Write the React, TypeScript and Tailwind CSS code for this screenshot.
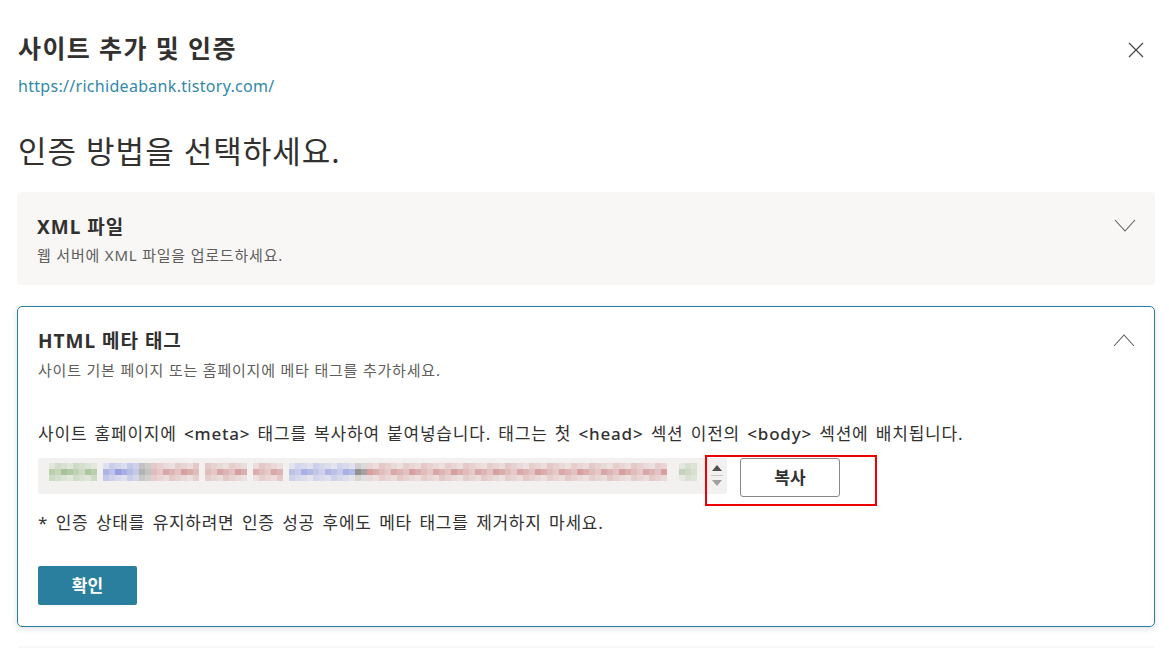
import React from "react";

const font = { fontFamily: '"Noto Sans", "Noto Sans CJK KR", sans-serif' };

const segs = [
  { x0: 49, x1: 97, c: "#9fbf8f" },
  { x0: 103, x1: 139, c: "#8f99e0" },
  { x0: 139, x1: 151, c: "#8a8a8a" },
  { x0: 151, x1: 199, c: "#d49a9a" },
  { x0: 205, x1: 247, c: "#d49a9a" },
  { x0: 253, x1: 283, c: "#d49a9a" },
  { x0: 289, x1: 355, c: "#a3abe4" },
  { x0: 355, x1: 367, c: "#8a8a8a" },
  { x0: 367, x1: 667, c: "#d49a9a" },
  { x0: 679, x1: 697, c: "#b7c9a8" },
];

const BlurredTag = () => {
  const rects: React.ReactElement[] = [];
  segs.forEach((s, si) => {
    for (let x = s.x0; x < s.x1; x += 6) {
      for (let r = 0; r < 3; r++) {
        const h = ((x * 37 + r * 17 + si * 11) % 7) / 10;
        const op = r === 1 ? 0.45 + h * 0.8 : 0.18 + h * 0.45;
        rects.push(
          <rect key={`${si}-${x}-${r}`} x={x - 38} y={5 + r * 6} width={6} height={6} fill={s.c} opacity={op} />
        );
      }
    }
  });
  return (
    <svg width="666" height="36" className="absolute left-0 top-0">
      {rects}
    </svg>
  );
};

const Chevron = ({ up }: { up?: boolean }) => (
  <svg width="22" height="14" viewBox="0 0 22 14" className="mt-1">
    <path d={up ? "M1 13 L11 2 L21 13" : "M1 1 L11 12 L21 1"} fill="none" stroke="#605e5c" strokeWidth="1.1" />
  </svg>
);

export default function App() {
  return (
    <div className="w-[1169px] h-[648px] overflow-hidden bg-white text-[#323130]" style={font}>
      <div className="flex justify-between pl-[18px] pr-[25px] pt-[33px]">
        <div>
          <h1 className="text-[25px] font-bold leading-[30px] tracking-[1.4px]">사이트 추가 및 인증</h1>
          <a className="block mt-[12px] text-[16px] leading-[22px] tracking-[0.3px] text-[#3188a8]">
            https://richideabank.tistory.com/
          </a>
        </div>
        <svg width="16" height="16" viewBox="0 0 16 16" className="mt-[9px]">
          <path d="M1 1 L15 15 M15 1 L1 15" stroke="#444" strokeWidth="1.2" />
        </svg>
      </div>

      <h2 className="pl-[18px] mt-[34px] text-[31px] leading-[40px] tracking-[1px] font-normal">인증 방법을 선택하세요.</h2>

      <div className="ml-[17px] w-[1138px] mt-[21px] flex flex-col">
        <div className="bg-[#f8f7f6] rounded-[4px] pl-[20px] pr-[19px] pt-[23px] pb-[21px] flex justify-between">
          <div>
            <div className="text-[19px] font-bold leading-[24px] tracking-[1px]">XML 파일</div>
            <div className="mt-[7px] text-[15px] leading-[18px] tracking-[0.8px] text-[#605e5c]">
              웹 서버에 XML 파일을 업로드하세요.
            </div>
          </div>
          <Chevron />
        </div>

        <div className="mt-[21px] border border-[#2b7f9e] rounded-[5px] shadow-[0_2px_6px_rgba(0,0,0,0.12)] pl-[20px] pr-[19px] pt-[22px] pb-[21px]">
          <div className="flex justify-between">
            <div>
              <div className="text-[19px] font-bold leading-[24px] tracking-[1px]">HTML 메타 태그</div>
              <div className="mt-[8px] text-[15px] leading-[18px] tracking-[0.8px] text-[#605e5c]">
                사이트 기본 페이지 또는 홈페이지에 메타 태그를 추가하세요.
              </div>
            </div>
            <Chevron up />
          </div>

          <p className="mt-[43px] text-[17px] leading-[24px] tracking-[0.8px] [word-spacing:2px]">
            사이트 홈페이지에 <span className="font-medium">&lt;meta&gt;</span> 태그를 복사하여 붙여넣습니다. 태그는 첫{" "}
            <span className="font-medium">&lt;head&gt;</span> 섹션 이전의 <span className="font-medium">&lt;body&gt;</span>{" "}
            섹션에 배치됩니다.
          </p>

          <div className="relative mt-[12px] flex items-start gap-[13px]">
            <div className="relative w-[689px] h-[36px] bg-[#f2f1f0] rounded-[3px] flex justify-end">
              <BlurredTag />
              <div className="w-[20px] flex flex-col items-center pt-[7px]">
                <svg width="10" height="6"><path d="M0 6 L5 0 L10 6 Z" fill="#505050" /></svg>
                <div className="w-[12px] h-px bg-[#c8c8c8] my-[4px]" />
                <svg width="10" height="6"><path d="M0 0 L5 6 L10 0 Z" fill="#a0a0a0" /></svg>
              </div>
            </div>
            <button className="w-[100px] h-[39px] border border-[#8a8886] rounded-[3px] bg-white text-[17px] font-bold text-[#323130]">
              복사
            </button>
            <div className="absolute left-[667px] top-[-3px] w-[172px] h-[51px] border-2 border-[#ee0000]" />
          </div>

          <p className="mt-[14px] text-[17px] leading-[24px] tracking-[0.7px] [word-spacing:2.5px]">
            * 인증 상태를 유지하려면 인증 성공 후에도 메타 태그를 제거하지 마세요.
          </p>

          <button className="mt-[31px] w-[99px] h-[39px] rounded-[2px] bg-[#2b7f9e] text-white text-[17px] font-bold">
            확인
          </button>
        </div>

        <div className="mt-[19px] h-[60px] bg-[#f8f7f6] rounded-[4px]" />
      </div>
    </div>
  );
}
